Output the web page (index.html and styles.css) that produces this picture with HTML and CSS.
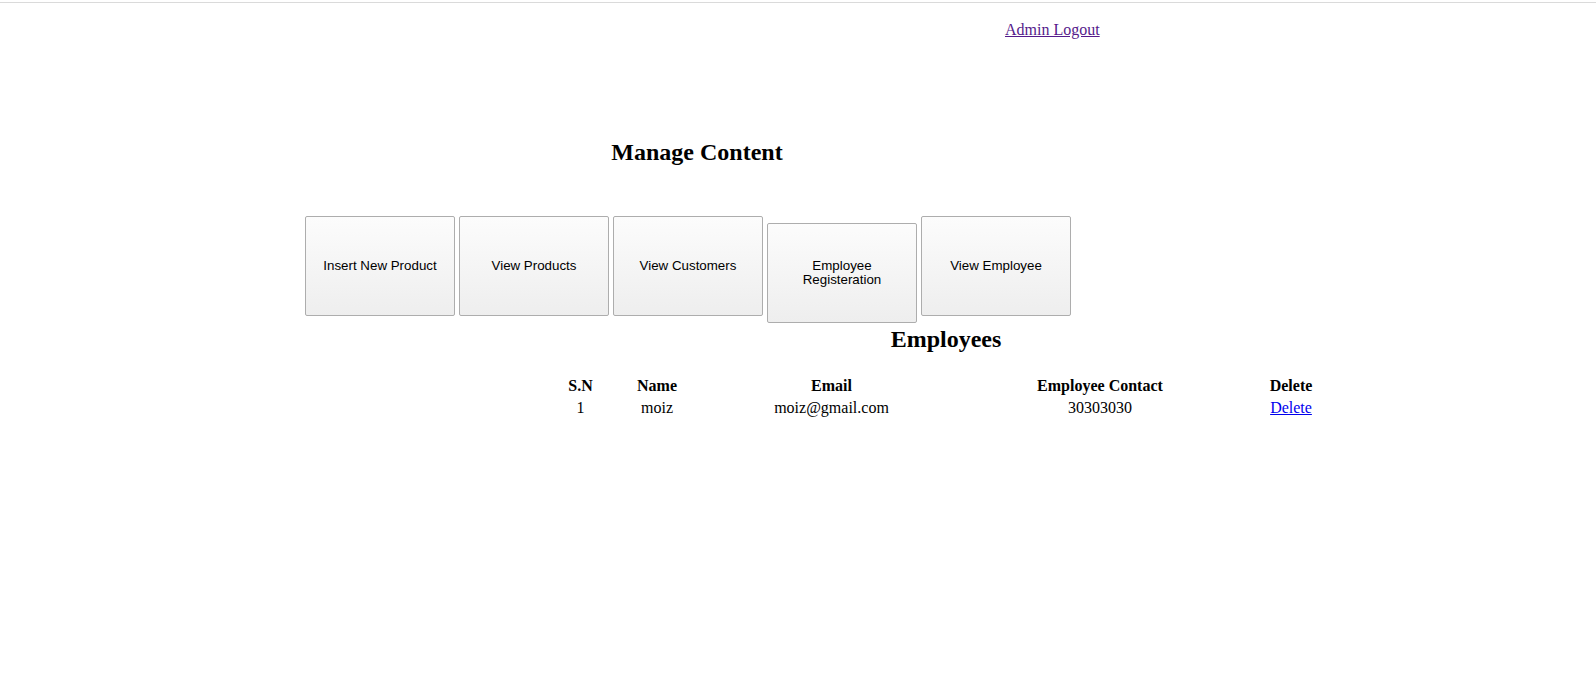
FILE: index.html
```html
<!DOCTYPE html>
<html>
<head>
<meta charset="utf-8">
<title>Admin Panel</title>
<link rel="stylesheet" href="styles.css">
</head>
<body>
<div class="topline"></div>
<header class="header">
  <a class="logout" href="#">Admin Logout</a>
</header>
<main class="content">
  <h2 class="title">Manage Content</h2>
  <div class="buttons">
    <button class="btn">Insert New Product</button>
    <button class="btn">View Products</button>
    <button class="btn">View Customers</button>
    <button class="btn">Employee Registeration</button>
    <button class="btn">View Employee</button>
  </div>
</main>
<section class="employees">
  <h2 class="subtitle">Employees</h2>
  <table class="emp-table">
    <colgroup>
      <col class="c-sn">
      <col class="c-name">
      <col class="c-email">
      <col class="c-contact">
      <col class="c-del">
    </colgroup>
    <tr>
      <th>S.N</th>
      <th>Name</th>
      <th>Email</th>
      <th>Employee Contact</th>
      <th>Delete</th>
    </tr>
    <tr>
      <td>1</td>
      <td>moiz</td>
      <td>moiz@gmail.com</td>
      <td>30303030</td>
      <td><a class="del" href="#">Delete</a></td>
    </tr>
  </table>
</section>
</body>
</html>
```
FILE: styles.css
```css
html, body {
  margin: 0;
  padding: 0;
  background: #ffffff;
}
body {
  font-family: "Liberation Serif", "Times New Roman", serif;
  font-size: 16px;
  color: #000;
}
.topline {
  height: 2px;
  border-bottom: 1px solid #dadada;
}
.header {
  padding: 18px 0 0 1005px;
  line-height: 18px;
  height: 18px;
}
.logout {
  color: #551a8b;
  text-decoration: underline;
}
.content {
  margin-left: 305px;
  width: 784px;
}
.title {
  margin: 99px 0 0 0;
  font-size: 24px;
  font-weight: bold;
  line-height: 28px;
  text-align: center;
}
.buttons {
  margin-top: 50px;
  display: flex;
  align-items: baseline;
  gap: 4px;
}
.btn {
  box-sizing: border-box;
  width: 150px;
  height: 100px;
  padding: 0 6px 1px 6px;
  margin: 0;
  font-family: "Liberation Sans", Arial, sans-serif;
  font-size: 13.333px;
  line-height: 14px;
  color: #000;
  background: linear-gradient(to bottom, #fcfcfc 0%, #eeeeee 100%);
  border: 1px solid #adadad;
  border-radius: 2px;
}
.employees {
  margin-left: 561px;
  width: 770px;
}
.subtitle {
  margin: 2px 0 21px 0;
  font-size: 24px;
  font-weight: bold;
  line-height: 28px;
  text-align: center;
}
.emp-table {
  width: 770px;
  table-layout: fixed;
  border-collapse: separate;
  border-spacing: 0 2px;
}
.emp-table th,
.emp-table td {
  padding: 1px;
  line-height: 18px;
  text-align: center;
  font-size: 16px;
}
.emp-table th {
  font-weight: bold;
}
.c-sn { width: 39px; }
.c-name { width: 114px; }
.c-email { width: 235px; }
.c-contact { width: 302px; }
.c-del { width: 80px; }
.del {
  color: #0000ee;
  text-decoration: underline;
}
```
